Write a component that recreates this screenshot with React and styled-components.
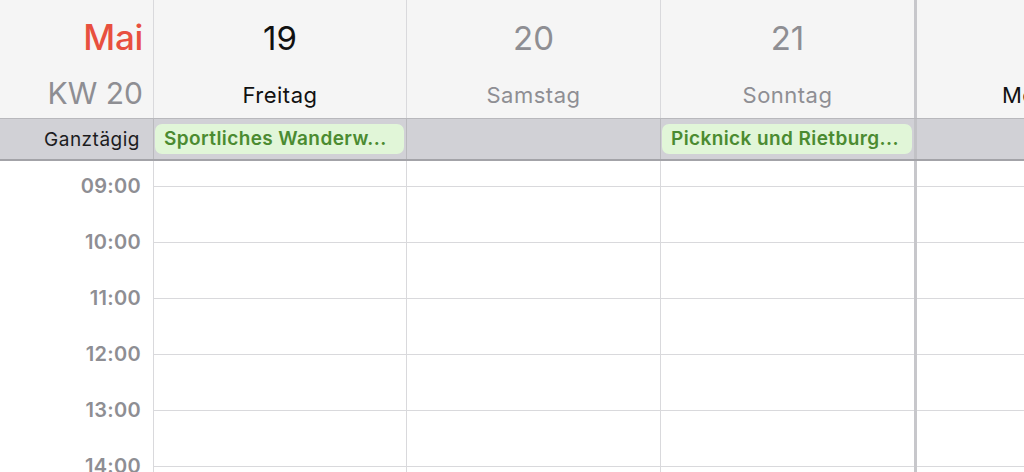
import React from 'react';
import styled, { createGlobalStyle } from 'styled-components';

// Colors
const red = '#e8503f';
const gray = '#8e8e93';
const lineColor = '#d9d9dc';
const bandColor = '#d1d1d6';
const chipBg = '#e1f6d8';
const chipText = '#4b8b31';

const GlobalStyle = createGlobalStyle`
  html, body {
    margin: 0;
    padding: 0;
    background: #ffffff;
    overflow: hidden;
  }
  body {
    font-family: Inter, "Noto Sans", "Liberation Sans", sans-serif;
    -webkit-font-smoothing: antialiased;
  }
`;

const Calendar = styled.div`
  width: 1024px;
  height: 472px;
  overflow: hidden;
`;

const Row = styled.div`
  display: grid;
  grid-template-columns: 154px 253px 254px 256px 253px;
  width: 1170px;
  height: ${props => props.h}px;
  border-bottom: ${props => props.bottom || 'none'};
  background: ${props => props.bg || 'transparent'};
  box-sizing: border-box;
`;

const Cell = styled.div`
  box-sizing: border-box;
  border-right: ${props => (props.thick ? `3px solid #c7c7cb` : `1px solid ${lineColor}`)};
  min-width: 0;
`;

const TimeHead = styled(Cell)`
  display: flex;
  flex-direction: column;
  align-items: flex-end;
  padding-right: 10px;
  padding-top: 17px;
`;

const Month = styled.div`
  color: ${red};
  font-size: 35px;
  line-height: 40px;
  font-weight: 500;
  letter-spacing: -0.3px;
`;

const Week = styled.div`
  color: ${gray};
  font-size: 30px;
  line-height: 36px;
  margin-top: 18px;
  font-weight: 400;
`;

const DayHead = styled(Cell)`
  display: flex;
  flex-direction: column;
  align-items: center;
  padding-top: 18px;
  color: ${props => (props.weekend ? gray : '#111111')};
`;

const DayNum = styled.div`
  font-size: 33px;
  line-height: 40px;
  font-weight: 400;
`;

const DayName = styled.div`
  font-size: 22px;
  line-height: 28px;
  margin-top: 23px;
  letter-spacing: 0.5px;
`;

const BandLabel = styled(Cell)`
  display: flex;
  align-items: center;
  justify-content: flex-end;
  padding-right: 13px;
  font-size: 19px;
  letter-spacing: 0.5px;
  color: #1c1c1e;
  border-right-color: #b9b9bd;
`;

const BandCell = styled(Cell)`
  padding: 5px 2px 0 1px;
  border-right-color: ${props => (props.thick ? '#c2c2c6' : '#b9b9bd')};
`;

const Chip = styled.div`
  height: 30px;
  border-radius: 7px;
  background: ${chipBg};
  color: ${chipText};
  font-size: 19px;
  font-weight: 600;
  line-height: 30px;
  padding: 0 9px;
  white-space: nowrap;
  overflow: hidden;
  text-overflow: ellipsis;
  letter-spacing: 0.4px;
`;

const TimeCol = styled(Cell)`
  display: flex;
  flex-direction: column;
  align-items: flex-end;
  padding-top: 14px;
  padding-right: 12px;
`;

const TimeLabel = styled.div`
  height: 56px;
  line-height: 22px;
  font-size: 20px;
  font-weight: 600;
  letter-spacing: 0.3px;
  color: ${gray};
  flex-shrink: 0;
`;

const DayCol = styled(Cell)`
  display: flex;
  flex-direction: column;
`;

const Spacer = styled.div`
  height: 25px;
  flex-shrink: 0;
`;

const Slot = styled.div`
  height: 56px;
  flex-shrink: 0;
  box-sizing: border-box;
  border-top: 1px solid ${lineColor};
`;

const days = [
  { num: '19', name: 'Freitag' },
  { num: '20', name: 'Samstag', weekend: true },
  { num: '21', name: 'Sonntag', weekend: true, thick: true },
  { num: '22', name: 'Montag' },
];

const allDay = ['Sportliches Wanderw...', '', 'Picknick und Rietburg...', ''];
const hours = ['09:00', '10:00', '11:00', '12:00', '13:00', '14:00'];

export default function App() {
  return (
    <Calendar>
      <GlobalStyle />
      <Row h={119} bg="#f5f5f5" bottom="1px solid #b8b8bc">
        <TimeHead>
          <Month>Mai</Month>
          <Week>KW 20</Week>
        </TimeHead>
        {days.map(d => (
          <DayHead key={d.num} weekend={d.weekend} thick={d.thick}>
            <DayNum>{d.num}</DayNum>
            <DayName>{d.name}</DayName>
          </DayHead>
        ))}
      </Row>
      <Row h={42} bg={bandColor} bottom="2px solid #a3a3a8">
        <BandLabel>Ganztägig</BandLabel>
        {allDay.map((title, i) => (
          <BandCell key={i} thick={days[i].thick}>
            {title && <Chip>{title}</Chip>}
          </BandCell>
        ))}
      </Row>
      <Row h={311}>
        <TimeCol>
          {hours.map(h => (
            <TimeLabel key={h}>{h}</TimeLabel>
          ))}
        </TimeCol>
        {days.map(d => (
          <DayCol key={d.num} thick={d.thick}>
            <Spacer />
            {hours.map(h => (
              <Slot key={h} />
            ))}
          </DayCol>
        ))}
      </Row>
    </Calendar>
  );
}
